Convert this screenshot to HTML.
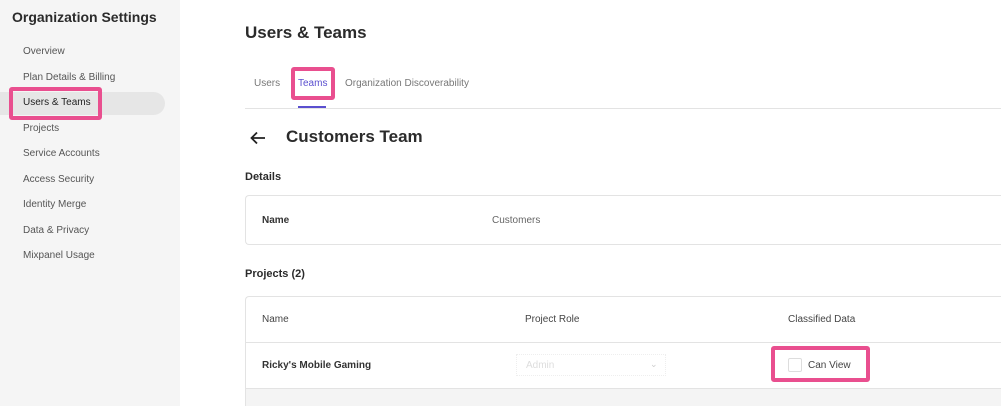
<!DOCTYPE html>
<html><head><style>
*{margin:0;padding:0;box-sizing:border-box}
html,body{width:1001px;height:406px;overflow:hidden}
body{background:#fff;font-family:"Liberation Sans",sans-serif;color:#333;position:relative}
.a{position:absolute;white-space:nowrap}
.side{position:absolute;left:0;top:0;width:180px;height:406px;background:#f5f5f5}
.nav{font-size:10px;color:#555;left:23px;top:0}
.pink{position:absolute;border:4px solid #e94f8f;border-radius:3px}
</style></head><body>
<div class="side"></div>
<div class="a" style="left:12px;top:9px;font-size:14px;font-weight:bold;color:#2b2b2b">Organization Settings</div>
<div class="a" style="left:0;top:92px;width:165px;height:23px;background:#e6e6e6;border-radius:0 12px 12px 0"></div>
<div class="a nav" style="top:46px">Overview</div>
<div class="a nav" style="top:72px">Plan Details &amp; Billing</div>
<div class="a nav" style="top:97px;color:#222">Users &amp; Teams</div>
<div class="a nav" style="top:123px">Projects</div>
<div class="a nav" style="top:148px">Service Accounts</div>
<div class="a nav" style="top:174px">Access Security</div>
<div class="a nav" style="top:199px">Identity Merge</div>
<div class="a nav" style="top:225px">Data &amp; Privacy</div>
<div class="a nav" style="top:250px">Mixpanel Usage</div>
<div class="pink" style="left:9px;top:87px;width:93px;height:33px"></div>

<div class="a" style="left:245px;top:23px;font-size:17px;font-weight:bold;color:#2b2b2b">Users &amp; Teams</div>
<div class="a" style="left:254px;top:78px;font-size:10px;color:#777">Users</div>
<div class="a" style="left:298px;top:78px;font-size:10px;color:#5a4fcf">Teams</div>
<div class="a" style="left:345px;top:78px;font-size:10px;color:#777">Organization Discoverability</div>
<div class="pink" style="left:291px;top:67px;width:44px;height:33px"></div>
<div class="a" style="left:245px;top:108px;width:756px;height:1px;background:#e3e3e3"></div>
<div class="a" style="left:298px;top:106px;width:28px;height:2px;background:#5a4fcf"></div>
<svg class="a" style="left:250px;top:131px" width="16" height="14" viewBox="0 0 16 14"><path d="M15 7H2M7 1.5L1.5 7L7 12.5" fill="none" stroke="#222" stroke-width="1.8"/></svg>
<div class="a" style="left:286px;top:127px;font-size:17px;font-weight:bold;color:#2b2b2b">Customers Team</div>
<div class="a" style="left:245px;top:171px;font-size:11px;font-weight:bold;color:#2b2b2b">Details</div>
<div class="a" style="left:245px;top:195px;width:756px;height:50px;border:1px solid #e3e3e3;border-right:none;border-radius:4px 0 0 4px"></div>
<div class="a" style="left:262px;top:215px;font-size:10px;font-weight:bold;color:#333">Name</div>
<div class="a" style="left:492px;top:215px;font-size:10px;color:#666">Customers</div>
<div class="a" style="left:245px;top:268px;font-size:11px;font-weight:bold;color:#2b2b2b">Projects (2)</div>
<div class="a" style="left:245px;top:296px;width:756px;height:110px;border-left:1px solid #e3e3e3;border-top:1px solid #e3e3e3;border-radius:4px 0 0 0"></div>
<div class="a" style="left:246px;top:342px;width:755px;height:1px;background:#e3e3e3"></div>
<div class="a" style="left:246px;top:388px;width:755px;height:18px;background:#f4f4f4;border-top:1px solid #e3e3e3"></div>
<div class="a" style="left:262px;top:314px;font-size:10px;color:#444">Name</div>
<div class="a" style="left:525px;top:314px;font-size:10px;color:#444">Project Role</div>
<div class="a" style="left:788px;top:314px;font-size:10px;color:#444">Classified Data</div>
<div class="a" style="left:262px;top:360px;font-size:10px;font-weight:bold;color:#333">Ricky's Mobile Gaming</div>
<div class="a" style="left:516px;top:354px;width:150px;height:22px;border:1px dotted #eee"></div>
<div class="a" style="left:526px;top:360px;font-size:10px;color:#ddd">Admin</div>
<div class="a" style="left:650px;top:359px;font-size:9px;color:#ccc">&#8964;</div>
<div class="a" style="left:788px;top:358px;width:14px;height:14px;border:1px solid #ddd;border-radius:2px"></div>
<div class="a" style="left:808px;top:360px;font-size:10px;color:#444">Can View</div>
<div class="pink" style="left:771px;top:346px;width:99px;height:36px"></div>
</body></html>
